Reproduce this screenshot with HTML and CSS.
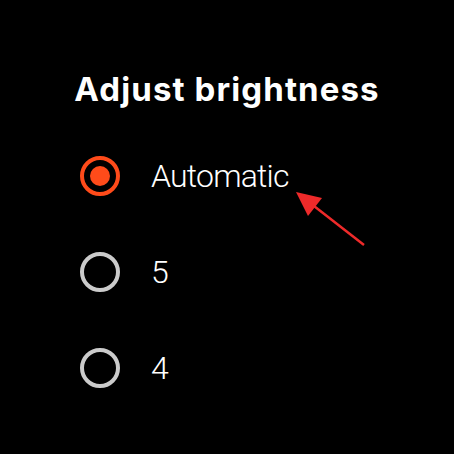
FILE: index.html
```html
<!DOCTYPE html>
<html lang="en">
<head>
    <meta charset="UTF-8">
    <title>Adjust brightness</title>
    <link rel="stylesheet" href="styles.css">
</head>
<body>
    <div class="screen">
        <div class="title">Adjust brightness</div>
        <div class="options">
            <div class="option selected">
                <span class="radio"></span>
                <span class="label">Automatic</span>
            </div>
            <div class="option">
                <span class="radio"></span>
                <span class="label">5</span>
            </div>
            <div class="option">
                <span class="radio"></span>
                <span class="label">4</span>
            </div>
        </div>
        <svg class="pointer" width="454" height="454" viewBox="0 0 454 454">
            <line x1="364" y1="245" x2="305" y2="199" stroke="#ee2a2a" stroke-width="2.5"/>
            <polygon points="296,192 322,198 308,216" fill="#ee2a2a"/>
        </svg>
    </div>
</body>
</html>
```

FILE: styles.css
```css
body {
    margin: 0;
    padding: 0;
    background-color: #000;
}
.screen {
    position: relative;
    width: 454px;
    height: 454px;
    overflow: hidden;
    background-color: #000;
}
.title {
    padding-top: 71px;
    text-align: center;
    font-family: 'Inter', sans-serif;
    font-weight: 700;
    font-size: 33px;
    line-height: 36px;
    letter-spacing: 1.1px;
    color: #fff;
}
.options {
    display: flex;
    flex-direction: column;
    padding-left: 80px;
    margin-top: 21px;
}
.option {
    display: flex;
    align-items: center;
    height: 96px;
}
.radio {
    width: 32px;
    height: 32px;
    border: 4px solid #cbcbcb;
    border-radius: 50%;
    position: relative;
    flex-shrink: 0;
}
.option.selected .radio {
    border-color: #ff4b1a;
}
.option.selected .radio::after {
    content: '';
    position: absolute;
    left: 6px;
    top: 6px;
    width: 20px;
    height: 20px;
    border-radius: 50%;
    background-color: #ff4b1a;
}
.label {
    margin-left: 31px;
    font-family: 'Roboto', sans-serif;
    font-weight: 300;
    font-size: 32px;
    letter-spacing: -0.8px;
    color: #fff;
}
.pointer {
    position: absolute;
    left: 0;
    top: 0;
}
```
